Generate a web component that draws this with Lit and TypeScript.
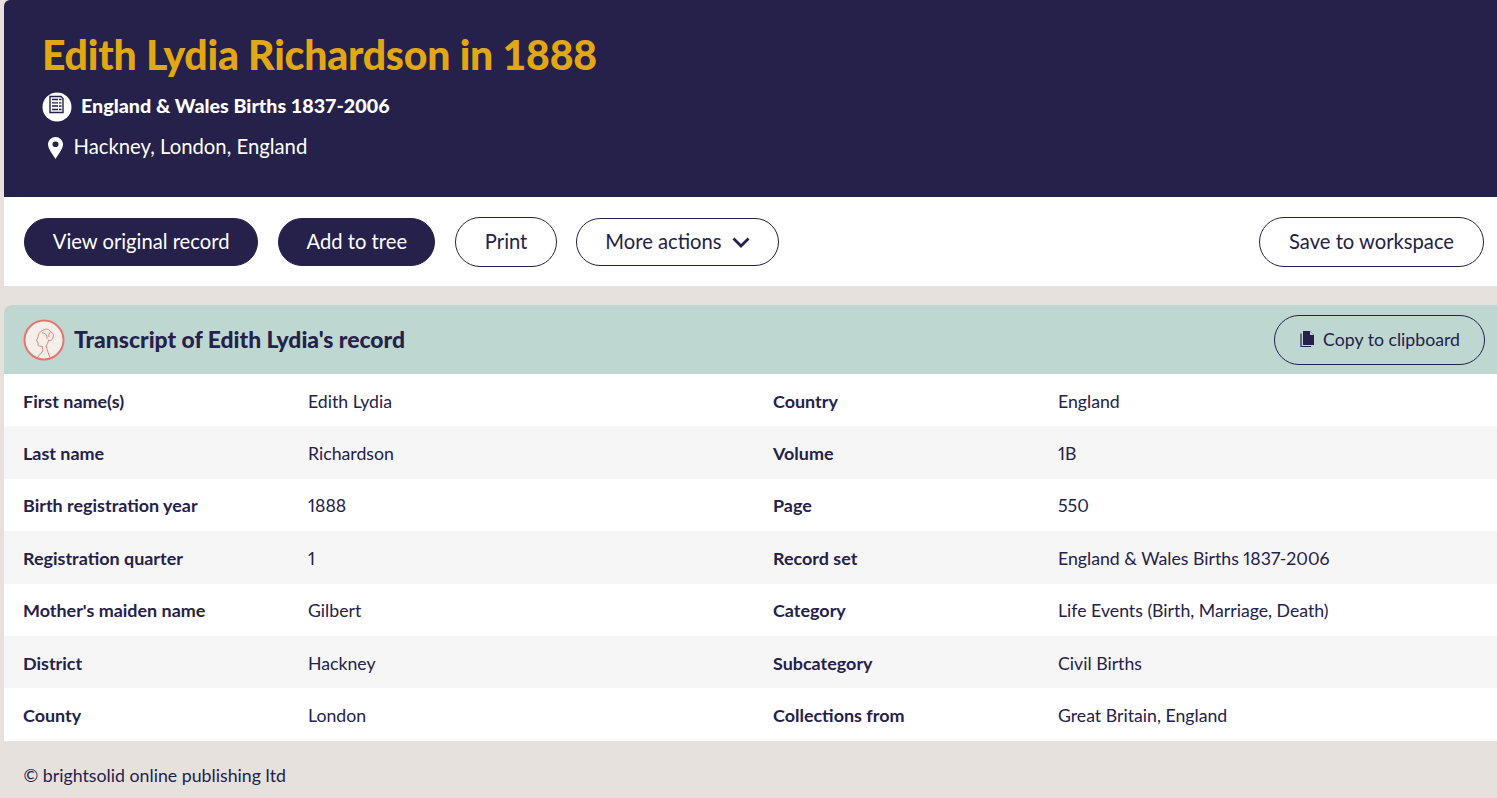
import { LitElement, html, css } from "lit";
import { customElement } from "lit/decorators.js";

const rows: [string, string, string, string][] = [
  ["First name(s)", "Edith Lydia", "Country", "England"],
  ["Last name", "Richardson", "Volume", "1B"],
  ["Birth registration year", "1888", "Page", "550"],
  ["Registration quarter", "1", "Record set", "England & Wales Births 1837-2006"],
  ["Mother's maiden name", "Gilbert", "Category", "Life Events (Birth, Marriage, Death)"],
  ["District", "Hackney", "Subcategory", "Civil Births"],
  ["County", "London", "Collections from", "Great Britain, England"],
];

@customElement("app-root")
export class AppRoot extends LitElement {
  static styles = css`
    :host {
      display: block;
      height: 798px;
      overflow: hidden;
      background: #e6e1dc;
      color: #25214a;
      font-family: Lato, "Open Sans", sans-serif;
      padding-left: 4px;
      box-sizing: border-box;
    }
    .hero {
      background: #25214a;
      height: 197px;
      box-sizing: border-box;
      padding: 30px 0 0 39px;
      border-top-left-radius: 6px;
      color: #fff;
    }
    h1 {
      margin: 0 0 0 -1px;
      color: #e2a814;
      font-size: 41px;
      line-height: 50px;
      font-weight: 900;
      letter-spacing: -0.25px;
    }
    .set {
      display: flex;
      align-items: center;
      gap: 9px;
      margin-top: 10px;
      height: 30px;
      font-size: 19.7px;
      font-weight: 900;
    }
    .set svg { margin: 3px 0 0 -1px; }
    .place {
      display: flex;
      align-items: center;
      gap: 10.5px;
      margin-top: 11px;
      height: 30px;
      font-size: 20.3px;
      padding-left: 5px;
    }
    .place svg { margin-top: 3px; }
    .actions {
      background: #fff;
      height: 89px;
      display: flex;
      align-items: center;
      gap: 20px;
      padding: 1px 13px 0 20px;
      box-sizing: border-box;
    }
    .btn {
      height: 48px;
      box-sizing: border-box;
      border-radius: 25px;
      border: 1px solid #25214a;
      background: #fff;
      color: #25214a;
      font: 400 20.2px Lato, sans-serif;
      display: inline-flex;
      align-items: center;
      justify-content: center;
      padding: 0 28.5px 3px;
      white-space: nowrap;
    }
    .btn.solid { background: #25214a; color: #fff; padding: 0 27.3px 3px; }
    .btn.solid.view { padding: 0 27.8px 3px; }
    .btn.tall { height: 50px; }
    .btn.save { padding: 0 29px 3px; }
    .btn.more { gap: 10px; margin-left: -1px; }
    .btn.more svg { margin-top: 2px; }
    .spacer { flex: 1; }
    .panel-head {
      margin-top: 19px;
      height: 69px;
      background: #bed8d1;
      border-top-left-radius: 8px;
      display: flex;
      align-items: center;
      padding: 0 12px 0 19px;
      box-sizing: border-box;
      gap: 9px;
    }
    h2 {
      margin: 0 0 2px;
      font-size: 22.9px;
      font-weight: 900;
      flex: 1;
    }
    .copy {
      height: 50px;
      background: transparent;
      font-size: 17.7px;
      padding: 0 24px 0 25px;
      gap: 7px;
    }
    .copy svg { margin-bottom: 2px; }
    .row {
      display: grid;
      grid-template-columns: 285px 465px 285px 1fr;
      padding: 15.7px 0 0 19px;
      box-sizing: border-box;
      height: 52.4px;
      line-height: 22px;
      align-items: baseline;
      background: #fff;
      font-size: 17.7px;
    }
    .row:nth-child(even) { background: #f6f6f6; }
    .row span { font-variant-numeric: proportional-nums; }
    .row b { font-weight: 700; font-size: 17.95px; }
    footer {
      padding: 23.5px 0 0 19.5px;
      font-size: 17.75px;
      line-height: 22px;
    }
  `;

  render() {
    return html`
      <section class="hero">
        <h1>Edith Lydia Richardson in 1888</h1>
        <div class="set">
          <svg width="30" height="30" viewBox="0 0 30 30">
            <circle cx="15" cy="15" r="14.5" fill="#fff" />
            <path d="M8 4.500h11l2 2v14H8z" fill="none" stroke="#25214a" stroke-width="1.400" />
            <path d="M10 7.500h6M10 10.800h6M10 14h6M10 17.500h6" stroke="#25214a" stroke-width="1.300" />
            <path d="M17 7.500h2.500M17 10.800h2.500M17 14h2.500M17 17.500h2.500" stroke="#25214a" stroke-width="1.300" />
          </svg>
          <span>England &amp; Wales Births 1837-2006</span>
        </div>
        <div class="place">
          <svg width="15" height="22" viewBox="0 0 14 22" preserveAspectRatio="none">
            <path fill="#fff" fill-rule="evenodd" d="M7 0a7 7 0 0 1 7 7.300c0 4.700-4.500 10.200-7 14.700C4.500 17.500 0 12 0 7.300A7 7 0 0 1 7 0zm0 4.500a2.800 2.800 0 1 0 0 5.600 2.800 2.800 0 0 0 0-5.600z" />
          </svg>
          <span>Hackney, London, England</span>
        </div>
      </section>
      <nav class="actions">
        <span class="btn solid view">View original record</span>
        <span class="btn solid">Add to tree</span>
        <span class="btn tall">Print</span>
        <span class="btn more">More actions
          <svg width="18" height="12" viewBox="0 0 18 12"><path d="M1.500 2.500l7.500 7.500 7.500-7.500" fill="none" stroke="#25214a" stroke-width="2.800" /></svg>
        </span>
        <span class="spacer"></span>
        <span class="btn tall save">Save to workspace</span>
      </nav>
      <header class="panel-head">
        <svg width="42" height="42" viewBox="0 0 42 42">
          <circle cx="21" cy="21" r="19.500" fill="#f4efeb" stroke="#e8736c" stroke-width="2" />
          <g fill="none" stroke="#e8736c" stroke-width="0.900">
            <path d="M21 11C17 12 15 15 15 18L13.500 22L15 23L15 26C15 27.500 17 27.500 19 27L20 31C19 34 16 36 14 39" />
            <path d="M21 11C24 9 27 11 27.500 13C30 13 31 16 30 18C30 21 27 22 25.500 21C25 24 24 26 23 27C24 30 25 34 27 38" />
            <path d="M19 14C23 14 24.500 17 24 20M27.500 13C26 14 25.500 16 26 18" />
          </g>
        </svg>
        <h2>Transcript of Edith Lydia's record</h2>
        <span class="btn copy">
          <svg width="16" height="18" viewBox="0 0 16 18">
            <path d="M1 3.500v13h10" fill="none" stroke="#25214a" stroke-width="1.200" />
            <path d="M3 1h7l4 4v10H3z" fill="#25214a" />
            <path d="M10 1l4 4h-4z" fill="#bed8d1" />
          </svg>
          Copy to clipboard
        </span>
      </header>
      <main>
        ${rows.map(
          (r) => html`<div class="row"><b>${r[0]}</b><span>${r[1]}</span><b>${r[2]}</b><span>${r[3]}</span></div>`
        )}
      </main>
      <footer>© brightsolid online publishing ltd</footer>
    `;
  }
}
